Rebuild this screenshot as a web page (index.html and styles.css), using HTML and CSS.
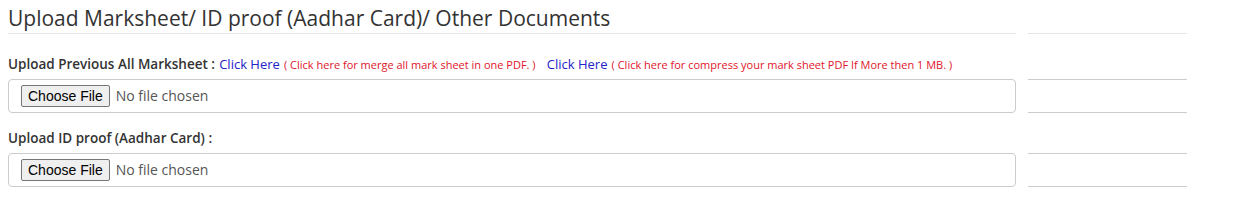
FILE: index.html
```html
<!DOCTYPE html>
<html lang="en">
<head>
    <meta charset="UTF-8">
    <meta name="viewport" content="width=device-width, initial-scale=1.0">
    <title>Upload Documents</title>
    <link rel="stylesheet" href="styles.css">
</head>
<body>
    <div class="row">
        <div class="main">
            <h3 class="title">Upload Marksheet/ ID proof (Aadhar Card)/ Other Documents</h3>
            <div class="group">
                <div class="line">
                    <label class="lbl">Upload Previous All Marksheet :</label>
                    <a href="#" class="link">Click Here</a>
                    <span class="note">( Click here for merge all mark sheet in one PDF. )</span>
                    <a href="#" class="link link2">Click Here</a>
                    <span class="note">( Click here for compress your mark sheet PDF If More then 1 MB. )</span>
                </div>
                <div class="box">
                    <input type="file">
                </div>
            </div>
            <div class="group">
                <div class="line">
                    <label class="lbl">Upload ID proof (Aadhar Card) :</label>
                </div>
                <div class="box">
                    <input type="file">
                </div>
            </div>
        </div>
        <div class="side">
            <div class="side-top"></div>
            <div class="side-box"></div>
            <div class="side-box"></div>
        </div>
    </div>
</body>
</html>
```

FILE: styles.css
```css
body {
    margin:0;
    font-family:"Open Sans", sans-serif;
    color:#333;
    background:#fff;
}
.row {
    display:flex;
    gap:12px;
    padding:0 8px;
}
.main {width:1008px;}
.title {
    margin:0;
    padding:6px 0 2px 0;
    font-size:21px; font-weight:400;
    line-height:25px;
    border-bottom:1px solid #e5e5e5;
}
.group {margin-top:19px;}
.group + .group {margin-top:14px;}
.line {
    height:21px; line-height:21px;
    white-space:nowrap;
}
.lbl {
    font-size:13.5px; font-weight:600;
}
.link {
    color:#2323c8; font-size:13px;
    text-decoration:none;
}
.link2 {margin-left:7px;}
.note {
    color:#e0142a; font-size:11px;
}
.box {
    margin-top:5px;
    height:32px;
    border:1px solid #ccc;
    border-radius:4px;
    display:flex; align-items:center;
    padding:0 12px;
}
.box input {
    font-family:"Open Sans", sans-serif;
    font-size:14px; color:#555;
}
.box input::file-selector-button {
    font-family:"Liberation Sans", Arial, sans-serif;
    font-size:14px; color:#000;
    background:#efefef;
    border:1px solid #767676;
    border-radius:2px;
    padding:2px 6px;
    margin-right:6px;
}
.side {width:159px;}
.side-top {
    height:33px;
    border-bottom:1px solid #e5e5e5;
}
.side-box {
    margin-top:45px;
    height:32px;
    border-top:1px solid #ccc;
    border-bottom:1px solid #ccc;
}
.side-box + .side-box {margin-top:40px;}
```
